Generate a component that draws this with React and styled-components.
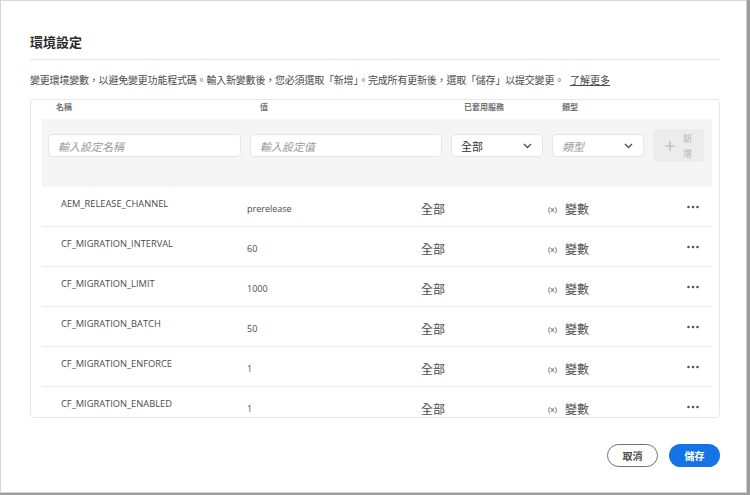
import styled, { createGlobalStyle } from "styled-components";

const GlobalStyle = createGlobalStyle`
  html, body {
    margin: 0;
    padding: 0;
    background: #9c9c9c;
  }
  body {
    font-family: "Open Sans", "Noto Sans CJK TC", sans-serif;
    color: #4b4b4b;
  }
  * {
    box-sizing: border-box;
  }
`;

const Dialog = styled.div`
  width: 747px;
  height: 493px;
  background: #fff;
  border: 1px solid #d6d6d6;
  border-right: 1px solid #cfcfcf;
  padding: 31px 26px 0 29px;
  display: flex;
  flex-direction: column;
`;

const Title = styled.h2`
  margin: 0;
  font-size: 13px;
  font-weight: 700;
  line-height: 20px;
  color: #2c2c2c;
`;

const Divider = styled.div`
  height: 1px;
  background: #e3e3e3;
  margin-top: 7px;
`;

const Description = styled.p`
  margin: 12px 0 0;
  font-size: 10px;
  line-height: 16px;
  letter-spacing: -0.2px;
  color: #4b4b4b;

  a {
    color: #4b4b4b;
    text-decoration: underline;
    margin-left: 6px;
    letter-spacing: 0;
  }
`;

const Table = styled.div`
  margin-top: 11px;
  height: 319px;
  border: 1px solid #e8e8e8;
  border-radius: 4px;
  overflow: hidden;
`;

const HeaderRow = styled.div`
  display: grid;
  grid-template-columns: 204px 204px 98px 1fr;
  padding: 2px 0 0 25px;
  height: 19px;
`;

const HeaderLabel = styled.span`
  font-size: 8px;
  font-weight: 700;
  line-height: 10px;
  color: #727272;
`;

const AddArea = styled.div`
  margin: 0 7px 0 11px;
  height: 68px;
  background: #f5f5f5;
  display: grid;
  grid-template-columns: 193px 192px 92px 92px 51px;
  column-gap: 9px;
  align-items: start;
  padding: 10px 0 0 6px;
`;

const Field = styled.div`
  margin-top: 5px;
  height: 23px;
  background: #fff;
  border: 1px solid #e6e6e6;
  border-radius: 4px;
  display: flex;
  align-items: center;
  justify-content: space-between;
  padding: 0 10px 0 9px;
  font-size: 11px;
  color: ${(p) => (p.$placeholder ? "#9a9a9a" : "#333")};
  font-style: ${(p) => (p.$placeholder ? "italic" : "normal")};
`;

const AddButton = styled.div`
  height: 33px;
  background: #ececec;
  border-radius: 4px;
  display: flex;
  align-items: center;
  padding-left: 12px;
  gap: 8px;
  color: #b4b4b4;
`;

const StackedLabel = styled.span`
  display: flex;
  flex-direction: column;
  font-size: 9px;
  line-height: 15px;
`;

const Rows = styled.div`
  margin: 0 7px 0 11px;
`;

const Row = styled.div`
  height: 40px;
  border-bottom: 1px solid #ececec;
  display: grid;
  grid-template-columns: 186px 174px 127px 139px 12px;
  align-items: center;
  padding-left: 19px;
`;

const NameCell = styled.span`
  align-self: start;
  padding-top: 11px;
  font-size: 9.3px;
  line-height: 12px;
  color: #4b4b4b;
`;

const ValueCell = styled.span`
  padding-top: 3px;
  font-size: 9px;
  color: #4b4b4b;
`;

const ServiceCell = styled.span`
  padding-top: 4px;
  font-size: 12px;
  color: #4b4b4b;
`;

const TypeCell = styled.span`
  padding-top: 4px;
  font-size: 12px;
  color: #4b4b4b;
  display: flex;
  align-items: center;
`;

const TypeIcon = styled.small`
  font-size: 8px;
  margin-right: 8px;
`;

const Footer = styled.div`
  display: flex;
  justify-content: flex-end;
  gap: 11px;
  margin-top: 26px;
`;

const Button = styled.button`
  height: 23px;
  min-width: 51px;
  padding: 0 12px;
  border-radius: 12px;
  font-family: inherit;
  font-size: 10px;
  font-weight: 700;
  cursor: pointer;
  border: ${(p) => (p.$primary ? "none" : "1.5px solid #707070")};
  background: ${(p) => (p.$primary ? "#1473e6" : "#fff")};
  color: ${(p) => (p.$primary ? "#fff" : "#4b4b4b")};
`;

const Chevron = () => (
  <svg width="9" height="6" viewBox="0 0 9 6">
    <path d="M1 1l3.5 3.5L8 1" fill="none" stroke="#555" strokeWidth="1.4" />
  </svg>
);

const Dots = () => (
  <svg width="12" height="4" viewBox="0 0 12 4">
    <circle cx="1.5" cy="2" r="1.3" fill="#555" />
    <circle cx="6" cy="2" r="1.3" fill="#555" />
    <circle cx="10.5" cy="2" r="1.3" fill="#555" />
  </svg>
);

const Plus = () => (
  <svg width="10" height="10" viewBox="0 0 10 10">
    <path d="M5 0v10M0 5h10" stroke="#b4b4b4" strokeWidth="1.2" />
  </svg>
);

const variables = [
  { name: "AEM_RELEASE_CHANNEL", value: "prerelease" },
  { name: "CF_MIGRATION_INTERVAL", value: "60" },
  { name: "CF_MIGRATION_LIMIT", value: "1000" },
  { name: "CF_MIGRATION_BATCH", value: "50" },
  { name: "CF_MIGRATION_ENFORCE", value: "1" },
  { name: "CF_MIGRATION_ENABLED", value: "1" },
];

const App = () => {
  return (
    <>
      <GlobalStyle />
      <Dialog>
        <Title>環境設定</Title>
        <Divider />
        <Description>
          變更環境變數，以避免變更功能程式碼。輸入新變數後，您必須選取「新增」。完成所有更新後，選取「儲存」以提交變更。
          <a href="#">了解更多</a>
        </Description>
        <Table>
          <HeaderRow>
            <HeaderLabel>名稱</HeaderLabel>
            <HeaderLabel>值</HeaderLabel>
            <HeaderLabel>已套用服務</HeaderLabel>
            <HeaderLabel>類型</HeaderLabel>
          </HeaderRow>
          <AddArea>
            <Field $placeholder>輸入設定名稱</Field>
            <Field $placeholder>輸入設定值</Field>
            <Field>
              全部
              <Chevron />
            </Field>
            <Field $placeholder>
              類型
              <Chevron />
            </Field>
            <AddButton>
              <Plus />
              <StackedLabel>
                <span>新</span>
                <span>增</span>
              </StackedLabel>
            </AddButton>
          </AddArea>
          <Rows>
            {variables.map((v) => (
              <Row key={v.name}>
                <NameCell>{v.name}</NameCell>
                <ValueCell>{v.value}</ValueCell>
                <ServiceCell>全部</ServiceCell>
                <TypeCell>
                  <TypeIcon>(x)</TypeIcon>變數
                </TypeCell>
                <Dots />
              </Row>
            ))}
          </Rows>
        </Table>
        <Footer>
          <Button>取消</Button>
          <Button $primary>儲存</Button>
        </Footer>
      </Dialog>
    </>
  );
};

export default App;
